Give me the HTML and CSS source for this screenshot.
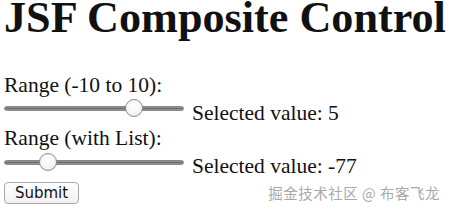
FILE: index.html
```html
<!DOCTYPE html>
<html lang="en">
<head>
  <meta charset="UTF-8">
  <title>JSF Composite Control</title>
  <link rel="stylesheet" href="styles.css">
</head>
<body>
  <h1 class="title">JSF Composite Control</h1>
  <form class="form">
    <div class="field">
      <label class="label" for="range1">Range (-10 to 10):</label>
      <div class="row">
        <input class="slider" type="range" id="range1" min="-10" max="10" value="5">
        <span class="value">Selected value: 5</span>
      </div>
    </div>
    <div class="field">
      <label class="label" for="range2">Range (with List):</label>
      <div class="row">
        <input class="slider" type="range" id="range2" min="-100" max="100" value="-58">
        <span class="value">Selected value: -77</span>
      </div>
    </div>
    <button class="submit" type="button">Submit</button>
  </form>
  <div class="watermark">掘金技术社区 @ 布客飞龙</div>
</body>
</html>
```

FILE: styles.css
```css
body {
  margin: 0;
  padding: 0 0 0 4px;
  font-family: "Liberation Serif", "Times New Roman", serif;
  color: #111;
  background: #fff;
  position: relative;
  height: 209px;
  overflow: hidden;
}

.title {
  font-size: 44.2px;
  font-weight: bold;
  line-height: 36px;
  margin: 0;
  white-space: nowrap;
}

.form {
  margin-top: 37px;
}

.label {
  display: block;
  font-size: 21.5px;
  line-height: 24px;
}

.row {
  display: flex;
  align-items: flex-start;
  height: 29px;
}

.field + .field .row {
  height: 32px;
}

.slider {
  -webkit-appearance: none;
  appearance: none;
  width: 180px;
  height: 18px;
  margin: 2px 8px 0 0;
  background: transparent;
}

.field + .field .slider {
  margin-top: 3px;
}

.slider::-webkit-slider-runnable-track {
  height: 5px;
  border-radius: 3px;
  background: linear-gradient(#a0a0a0, #6a6a6a 50%, #a8a8a8);
  border: 1px solid #888;
}

.slider::-webkit-slider-thumb {
  -webkit-appearance: none;
  width: 18px;
  height: 18px;
  margin-top: -7.5px;
  border-radius: 50%;
  background: radial-gradient(circle at 50% 35%, #fff, #f4f4f4 60%, #dedede);
  border: 1px solid #8c8c8c;
}

.value {
  font-size: 21.5px;
  line-height: 24px;
  margin-top: 4px;
}

.submit {
  display: block;
  width: 75px;
  height: 22px;
  padding: 0;
  font-family: "DejaVu Sans", sans-serif;
  font-size: 15px;
  color: #111;
  background: linear-gradient(#fff, #f1f1f1);
  border: 1px solid #a8a8a8;
  border-radius: 4px;
}

.watermark {
  position: absolute;
  right: 9px;
  bottom: 6px;
  font-family: "Noto Sans CJK SC", sans-serif;
  font-size: 14.5px;
  color: #a9a9a9;
  letter-spacing: 0.5px;
}
```
